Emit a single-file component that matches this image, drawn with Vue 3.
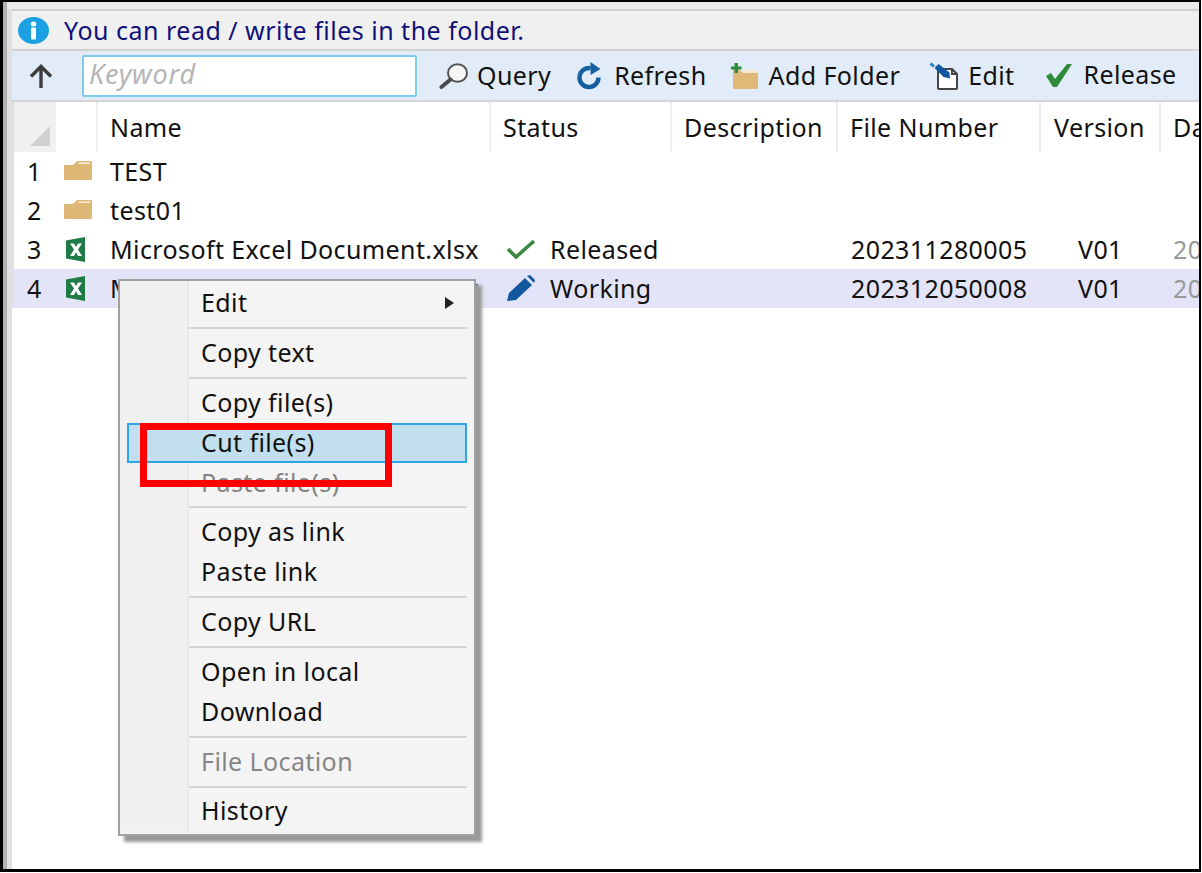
<script setup>
const headers = [
  { label: 'Name', w: 393 },
  { label: 'Status', w: 181 },
  { label: 'Description', w: 166 },
  { label: 'File Number', w: 203 },
  { label: 'Version', w: 120 },
  { label: 'Da', w: 60 },
]

const rows = [
  { no: 1, type: 'folder', name: 'TEST' },
  { no: 2, type: 'folder', name: 'test01' },
  { no: 3, type: 'excel', name: 'Microsoft Excel Document.xlsx', status: 'Released', number: '202311280005', version: 'V01', date: '20' },
  { no: 4, type: 'excel', name: 'Microsoft Excel Document.xlsx', status: 'Working', number: '202312050008', version: 'V01', date: '20', selected: true },
]

const menu = [
  [{ label: 'Edit', arrow: true }],
  [{ label: 'Copy text' }],
  [{ label: 'Copy file(s)' }, { label: 'Cut file(s)', active: true }, { label: 'Paste file(s)', disabled: true }],
  [{ label: 'Copy as link' }, { label: 'Paste link' }],
  [{ label: 'Copy URL' }],
  [{ label: 'Open in local' }, { label: 'Download' }],
  [{ label: 'File Location', disabled: true }],
  [{ label: 'History' }],
]
</script>

<template>
  <div class="frame">
    <div class="side">
      <div class="pane">
        <div class="top-strip"></div>

        <div class="info">
          <svg class="info-icon" viewBox="0 0 31 27" width="31" height="27">
            <ellipse cx="15.500" cy="13.500" rx="15.500" ry="13.500" fill="#1ba1e2" />
            <ellipse cx="15.500" cy="7" rx="2.800" ry="2.500" fill="#fff" />
            <rect x="13" y="10.500" width="5" height="12" rx="1" fill="#fff" />
          </svg>
          <span>You can read / write files in the folder.</span>
        </div>

        <div class="toolbar">
          <svg class="up" viewBox="0 0 26 26" width="26" height="26">
            <path d="M13 25V4M3 13.500 13 3.500l10 10" fill="none" stroke="#3c3c3c" stroke-width="3.400" />
          </svg>
          <div class="search">Keyword</div>
          <div class="tool query">
            <svg viewBox="0 0 30 26" width="30" height="26">
              <ellipse cx="18.500" cy="10" rx="9.500" ry="8.800" fill="#f4f6f8" stroke="#555" stroke-width="2" />
              <path d="M11.500 16.500 2.500 24" stroke="#4a4a4a" stroke-width="4" stroke-linecap="round" />
            </svg>
            <span>Query</span>
          </div>
          <div class="tool refresh">
            <svg viewBox="0 0 28 28" width="28" height="28">
              <path d="M22.500 15.500a9.500 9.500 0 1 1-8-9.300" fill="none" stroke="#15609f" stroke-width="4.400" />
              <path d="M14.500 0l10 7-10 6z" fill="#15609f" />
            </svg>
            <span>Refresh</span>
          </div>
          <div class="tool add">
            <svg viewBox="0 0 30 28" width="30" height="28">
              <path d="M3 8h7l3 3h14q1 0 1 1v14q0 1-1 1H4q-1 0-1-1z" fill="#e0b878" />
              <path d="M13 8h15v3H13z" fill="#f3e8d2" />
              <path d="M4.500 1h3.500v3.500h3.500v3H8V11H4.500V7.500H1v-3h3.500z" fill="#2e8b3c" />
            </svg>
            <span>Add Folder</span>
          </div>
          <div class="tool edit">
            <svg viewBox="0 0 30 28" width="30" height="28">
              <path d="M9 7h14l5 5v14q0 1-1 1H10q-1 0-1-1z" fill="#fff" stroke="#444" stroke-width="2" />
              <path d="M23 7v5h5" fill="none" stroke="#444" stroke-width="2" />
              <path d="M5.500 6l4-4 11 8.500 .5 6-6.500-1.500z" fill="#12589f" />
              <path d="M0.500 2.500 2.500 0.500l3.500 3-2 2z" fill="#2f7fc0" />
            </svg>
            <span>Edit</span>
          </div>
          <div class="tool release">
            <svg viewBox="0 0 26 24" width="26" height="24">
              <path d="M0 12l5-3 4 6L21 0h5L11 23H7z" fill="#2f8a3a" />
            </svg>
            <span>Release</span>
          </div>
        </div>

        <div class="table">
          <div class="head row-grid">
            <div class="corner"><i></i></div>
            <div class="head-icon"></div>
            <div v-for="h in headers" :key="h.label" class="head-cell" :style="{ width: h.w + 'px' }">{{ h.label }}</div>
          </div>

          <div v-for="r in rows" :key="r.no" class="row row-grid" :class="{ selected: r.selected }">
            <div class="no">{{ r.no }}</div>
            <div class="type">
              <svg v-if="r.type === 'folder'" class="fold" viewBox="0 0 28 19" width="28" height="19">
                <path d="M0 5q0-1 1-1h8l4-4h14q1 0 1 1v17q0 1-1 1H1q-1 0-1-1z" fill="#dfb878" />
                <path d="M15 1.500h11v1.500H14z" fill="#f6eedd" />
              </svg>
              <svg v-else class="xl" viewBox="0 0 20 25" width="20" height="25">
                <path d="M0 3.500 19 0v25L0 21.500z" fill="#1f7a45" />
                <path d="M4 6.500h4l2 3.500 2-3.500h4l-4 6 4 6.500h-4l-2-3.800L8 19H4l4-6.500z" fill="#fff" />
              </svg>
            </div>
            <div class="cell name" style="width: 393px">{{ r.name }}</div>
            <div class="cell status" style="width: 181px">
              <svg v-if="r.status === 'Released'" viewBox="0 0 30 22" width="30" height="22">
                <path d="M2 11l8 8L28 3" fill="none" stroke="#3a8a3f" stroke-width="3.600" />
              </svg>
              <svg v-if="r.status === 'Working'" viewBox="0 0 30 28" width="30" height="28">
                <path d="M1 27l2-8L19 4l7 7L10 26z" fill="#12589f" />
                <path d="M21 2l3-1 5 5-1 3z" fill="#12589f" />
              </svg>
              <span v-if="r.status">{{ r.status }}</span>
            </div>
            <div class="cell" style="width: 166px"></div>
            <div class="cell" style="width: 203px">{{ r.number }}</div>
            <div class="cell version" style="width: 120px">{{ r.version }}</div>
            <div class="cell date">{{ r.date }}</div>
          </div>
        </div>
      </div>
    </div>

    <div class="menu">
      <div class="gutter"></div>
      <div class="menu-list">
        <template v-for="(group, i) in menu" :key="i">
          <div v-if="i > 0" class="sep"></div>
          <div
            v-for="item in group"
            :key="item.label"
            class="item"
            :class="{ active: item.active, disabled: item.disabled }"
          >
            {{ item.label }}
            <span v-if="item.arrow" class="arrow"></span>
          </div>
        </template>
      </div>
    </div>

    <div class="callout"></div>
  </div>
</template>

<style>
html, body {
  margin: 0;
  background: #fff;
  overflow: hidden;
}
</style>

<style scoped>
.frame {
  position: relative;
  box-sizing: border-box;
  width: 1201px;
  height: 872px;
  overflow: hidden;
  border-style: solid;
  border-color: #000;
  border-width: 2px 2px 3px 3px;
  background: #fff;
  font-family: "Noto Sans", sans-serif;
  font-size: 25px;
  letter-spacing: 0.4px;
  color: #111;
}
.side {
  height: 100%;
  border-left: 4px solid #b2b2b2;
}
.pane {
  height: 100%;
  border-left: 5px solid #e0e0e0;
}
.top-strip {
  height: 7px;
  margin-left: -5px;
  background: #e9e9e9;
}
.info {
  box-sizing: border-box;
  display: flex;
  align-items: center;
  gap: 15px;
  height: 42px;
  padding-left: 6px;
  background: #f0f0f0;
  border-top: 2px solid #d0d0d0;
  border-bottom: 2px solid #d0d0d0;
  color: #10107a;
  letter-spacing: 0.5px;
}
.toolbar {
  display: flex;
  align-items: center;
  height: 49px;
  background: #e2ecf8;
  border-bottom: 2px solid #d4d4d4;
}
.up { margin-left: 16px; }
.search {
  box-sizing: border-box;
  width: 335px;
  height: 42px;
  margin-left: 28px;
  padding-left: 5px;
  line-height: 34px;
  background: #fff;
  border: 2px solid #7fcbeb;
  border-radius: 2px;
  color: #b5b5b5;
  font-style: italic;
  font-size: 27px;
  letter-spacing: 0.8px;
}
.tool {
  display: flex;
  align-items: center;
  white-space: nowrap;
}
.tool span { margin-bottom: 2px; }
.query { margin-left: 22px; gap: 8px; }
.refresh { margin-left: 25px; gap: 10px; }
.add { margin-left: 23px; gap: 9px; }
.edit { margin-left: 29px; gap: 9px; }
.release { margin-left: 31px; gap: 12px; }
.release span { margin-bottom: 4px; }
.table {
  overflow: hidden;
  border-left: 2px solid #e0e0e0;
}
.row-grid {
  display: flex;
  width: 1300px;
}
.head { height: 50px; }
.corner {
  position: relative;
  width: 42px;
  flex: none;
  background: #f0f0f0;
}
.corner i {
  position: absolute;
  right: 6px;
  bottom: 6px;
  width: 0;
  height: 0;
  border-left: 20px solid transparent;
  border-bottom: 20px solid #d0d0d0;
}
.head-icon {
  width: 42px;
  flex: none;
  border-right: 2px solid #eee;
  box-sizing: border-box;
}
.head-cell {
  box-sizing: border-box;
  padding-left: 12px;
  line-height: 50px;
  border-right: 2px solid #eee;
  white-space: nowrap;
  flex: none;
}
.head-cell:nth-child(7) { padding-left: 13px; }
.row {
  height: 39px;
  align-items: center;
}
.row.selected { background: #e4e4f8; }
.no {
  width: 42px;
  flex: none;
  padding-left: 13px;
  padding-bottom: 2px;
  box-sizing: border-box;
}
.type {
  width: 41px;
  flex: none;
  display: flex;
  align-items: center;
  padding-left: 8px;
  box-sizing: border-box;
}
.type .fold { margin-bottom: 3px; }
.type .xl { margin-left: 2px; }
.cell {
  box-sizing: border-box;
  padding-left: 14px;
  padding-bottom: 2px;
  white-space: nowrap;
  flex: none;
}
.name { padding-left: 13px; }
.status {
  display: flex;
  align-items: center;
  gap: 14px;
  padding-left: 16px;
}
.version { padding-left: 38px; }
.date { color: #999; padding-left: 13px; }
.menu {
  position: absolute;
  left: 115px;
  top: 277px;
  box-sizing: border-box;
  width: 358px;
  height: 557px;
  display: flex;
  background: #f4f4f4;
  border: 2px solid #a0a0a0;
  box-shadow: 6px 6px 3px #999;
}
.gutter {
  width: 67px;
  background: #f0f0f0;
  border-right: 2px solid #e8e8e8;
  margin: 0 0 3px;
  flex: none;
}
.menu-list {
  flex: 1;
  padding: 2px 7px 0 0;
}
.item {
  position: relative;
  height: 40px;
  line-height: 38px;
  padding-left: 12px;
}
.item.active {
  box-sizing: border-box;
  margin-left: -62px;
  padding-left: 72px;
  line-height: 34px;
  background: #c1dfee;
  border: 2px solid #2ea5e4;
}
.item.disabled { color: #858585; }
.sep {
  height: 2px;
  margin: 3.900px 0;
  background: #d4d4d4;
}
.arrow {
  position: absolute;
  right: 13px;
  top: 14px;
  width: 0;
  height: 0;
  border-top: 6px solid transparent;
  border-bottom: 6px solid transparent;
  border-left: 9px solid #222;
}
.callout {
  position: absolute;
  left: 137px;
  top: 421px;
  width: 252px;
  height: 64px;
  box-sizing: border-box;
  border: 7px solid #f00;
}
</style>
